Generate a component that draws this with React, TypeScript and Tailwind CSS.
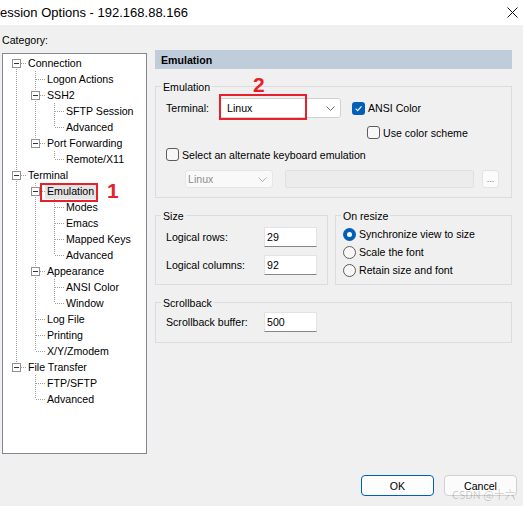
type TreeNode = { level: number; label: string; open?: boolean; selected?: boolean };

const TREE: TreeNode[] = [
  { level: 0, label: "Connection", open: true },
  { level: 1, label: "Logon Actions" },
  { level: 1, label: "SSH2", open: true },
  { level: 2, label: "SFTP Session" },
  { level: 2, label: "Advanced" },
  { level: 1, label: "Port Forwarding", open: true },
  { level: 2, label: "Remote/X11" },
  { level: 0, label: "Terminal", open: true },
  { level: 1, label: "Emulation", open: true, selected: true },
  { level: 2, label: "Modes" },
  { level: 2, label: "Emacs" },
  { level: 2, label: "Mapped Keys" },
  { level: 2, label: "Advanced" },
  { level: 1, label: "Appearance", open: true },
  { level: 2, label: "ANSI Color" },
  { level: 2, label: "Window" },
  { level: 1, label: "Log File" },
  { level: 1, label: "Printing" },
  { level: 1, label: "X/Y/Zmodem" },
  { level: 0, label: "File Transfer", open: true },
  { level: 1, label: "FTP/SFTP" },
  { level: 1, label: "Advanced" },
];

const DOT = { stroke: "#a0a0a0", strokeDasharray: "1 1", shapeRendering: "crispEdges" as const };

function hasNext(i: number) {
  const lv = TREE[i].level;
  for (let j = i + 1; j < TREE.length; j++) {
    if (TREE[j].level < lv) return false;
    if (TREE[j].level === lv) return true;
  }
  return false;
}

function ancestorAt(i: number, lv: number) {
  for (let j = i - 1; j >= 0; j--) if (TREE[j].level === lv) return j;
  return -1;
}

// one 19px indent column of the tree's dotted connectors
function Guide({ kind, up, down, open }: { kind: "pass" | "empty" | "own"; up?: boolean; down?: boolean; open?: boolean }) {
  return (
    <svg width="19" height="16" className="shrink-0">
      {kind === "pass" && <line x1="9.5" y1="0" x2="9.5" y2="16" {...DOT} />}
      {kind === "own" && (
        <>
          {up && <line x1="9.5" y1="0" x2="9.5" y2="8" {...DOT} />}
          {down && <line x1="9.5" y1="8" x2="9.5" y2="16" {...DOT} />}
          <line x1="10" y1="8.5" x2="19" y2="8.5" {...DOT} />
          {open && (
            <>
              <rect x="5.5" y="4.5" width="8" height="8" fill="#fff" stroke="#919191" shapeRendering="crispEdges" />
              <line x1="7" y1="8.5" x2="12" y2="8.5" stroke="#333" shapeRendering="crispEdges" />
            </>
          )}
        </>
      )}
    </svg>
  );
}

function Tree() {
  return (
    <div className="ml-[2px] mt-[6px] h-[401px] w-[145px] border border-[#828790] bg-white pl-[4px] pt-[1px]">
      {TREE.map((n, i) => {
        const cols = [];
        for (let c = 0; c < n.level; c++) {
          const a = ancestorAt(i, c);
          cols.push(<Guide key={c} kind={a >= 0 && hasNext(a) ? "pass" : "empty"} />);
        }
        cols.push(<Guide key="own" kind="own" up={i > 0} down={hasNext(i)} open={n.open} />);
        return (
          <div key={i} className="flex h-[16px] items-center">
            {cols}
            <span className={`h-[16px] px-[2px] leading-[17px] whitespace-nowrap ${n.selected ? "bg-[#e5e5e5]" : ""}`}>{n.label}</span>
          </div>
        );
      })}
    </div>
  );
}

function Check({ on }: { on?: boolean }) {
  if (on)
    return (
      <span className="flex h-[13px] w-[13px] shrink-0 items-center justify-center rounded-[3px] bg-[#005fb8]">
        <svg width="9" height="9" viewBox="0 0 9 9">
          <path d="M1.6 4.7 3.6 6.7 7.5 2.3" fill="none" stroke="#fff" strokeWidth="1.1" />
        </svg>
      </span>
    );
  return <span className="h-[13px] w-[13px] shrink-0 rounded-[3px] border border-[#5d5d5d] bg-[#f7f7f7]" />;
}

function Radio({ on }: { on?: boolean }) {
  if (on)
    return (
      <span className="flex h-[13px] w-[13px] shrink-0 items-center justify-center rounded-full bg-[#005fb8]">
        <span className="h-[5px] w-[5px] rounded-full bg-white" />
      </span>
    );
  return <span className="h-[13px] w-[13px] shrink-0 rounded-full border border-[#5d5d5d] bg-[#f7f7f7]" />;
}

function Chevron({ color }: { color: string }) {
  return (
    <svg width="9" height="5" viewBox="0 0 9 5">
      <path d="M0.5 0.5 4.5 4.5 8.5 0.5" fill="none" stroke={color} strokeWidth="1" />
    </svg>
  );
}

function Group({ title, className, inner, children }: { title: string; className?: string; inner?: string; children?: React.ReactNode }) {
  return (
    <div className={`border border-[#dcdcdc] ${className ?? ""}`}>
      <div className="-mt-[7px] ml-[5px] h-[13px] w-fit bg-[#f0f0f0] px-[2px] leading-[14px]">{title}</div>
      <div className={inner}>{children}</div>
    </div>
  );
}

function Field({ label, value }: { label: string; value: string }) {
  return (
    <div className="flex h-[20px] items-center leading-[20px]">
      <span className="h-[20px] w-[98px] leading-[21px]">{label}</span>
      <span className="h-[20px] w-[53px] border border-[#e3e3e3] border-b-[#868686] bg-white pl-[2px] leading-[19px]">{value}</span>
    </div>
  );
}

function RadioRow({ on, label }: { on?: boolean; label: string }) {
  return (
    <div className="flex h-[18px] items-center">
      <Radio on={on} />
      <span className="ml-[3px] h-[18px] leading-[19px]">{label}</span>
    </div>
  );
}

export default function App() {
  return (
    <div className="relative flex h-[506px] w-[523px] flex-col overflow-hidden bg-[#f0f0f0] font-['Liberation_Sans',Arial,sans-serif] text-[10.6px] text-black">
      <div className="flex h-[25px] shrink-0 items-center justify-between bg-white pr-[5px]">
        <span className="text-[13px]">ession Options - 192.168.88.166</span>
        <svg width="11" height="11" viewBox="0 0 11 11">
          <path d="M0.5 0.5 10.5 10.5 M10.5 0.5 0.5 10.5" stroke="#111" strokeWidth="1" />
        </svg>
      </div>

      <div className="flex flex-1 items-start">
        <div>
          <div className="ml-[2px] mt-[8px] h-[14px] leading-[15px]">Category:</div>
          <Tree />
        </div>

        <div className="ml-[8px] mt-[25px] w-[357px]">
          <div className="h-[19px] bg-[#bfcddb] pl-[6px] font-bold leading-[20px]">Emulation</div>

          <Group title="Emulation" className="mt-[17px]" inner="pb-[9px] pl-[10px]">
            <div className="mt-[5px] flex h-[20px] items-center">
              <span className="h-[20px] w-[53px] leading-[21px]">Terminal:</span>
              <span className="flex h-[20px] w-[122px] items-center justify-between rounded-[3px] border border-[#d1d1d1] bg-white pl-[7px] pr-[5px]">
                <span className="leading-[19px]">Linux</span>
                <Chevron color="#6b6b6b" />
              </span>
              <span className="ml-[11px]">
                <Check on />
              </span>
              <span className="ml-[3px] h-[20px] leading-[21px]">ANSI Color</span>
            </div>
            <div className="mt-[8px] flex h-[13px] items-center pl-[201px]">
              <Check />
              <span className="ml-[3px] h-[13px] leading-[14px]">Use color scheme</span>
            </div>
            <div className="mt-[9px] flex h-[13px] items-center">
              <Check />
              <span className="ml-[3px] h-[13px] leading-[14px]">Select an alternate keyboard emulation</span>
            </div>
            <div className="mt-[9px] flex h-[18px]">
              <span className="ml-[19px] flex w-[88px] items-center justify-between rounded-[3px] border border-[#e6e6e6] bg-[#f9f9f9] pl-[2px] pr-[5px] text-[#8e8e8e]">
                <span className="leading-[17px]">Linux</span>
                <Chevron color="#b5b5b5" />
              </span>
              <span className="ml-[12px] w-[189px] rounded-[2px] border border-[#e0e0e0] bg-[#ececec]" />
              <span className="ml-[8px] flex w-[17px] items-end justify-center rounded-[3px] border border-[#e3e3e3] bg-[#fbfbfb] pb-[3px] text-[9px] leading-none text-[#7a7a7a]">
                ...
              </span>
            </div>
          </Group>

          <div className="mt-[17px] flex">
            <Group title="Size" className="h-[70px] w-[173px]" inner="pl-[10px]">
              <div className="mt-[5px]">
                <Field label="Logical rows:" value="29" />
              </div>
              <div className="mt-[8px]">
                <Field label="Logical columns:" value="92" />
              </div>
            </Group>
            <Group title="On resize" className="ml-[7px] h-[70px] w-[177px]" inner="pl-[7px]">
              <div className="mt-[3px]">
                <RadioRow on label="Synchronize view to size" />
                <RadioRow label="Scale the font" />
                <RadioRow label="Retain size and font" />
              </div>
            </Group>
          </div>

          <Group title="Scrollback" className="mt-[17px] h-[41px]" inner="pl-[10px]">
            <div className="mt-[3px]">
              <Field label="Scrollback buffer:" value="500" />
            </div>
          </Group>
        </div>
      </div>

      <div className="flex h-[31px] shrink-0 items-start justify-end gap-[10px] pr-[6px]">
        <button className="h-[21px] w-[73px] rounded-[4px] border border-[#005fb8] bg-[#fdfdfd] leading-[20px]">OK</button>
        <button className="h-[21px] w-[73px] rounded-[4px] border border-[#d0d0d0] bg-[#fbfbfb] leading-[20px]">Cancel</button>
      </div>

      {/* red callouts */}
      <div className="absolute left-[40px] top-[183px] h-[19px] w-[58px] border-2 border-[#e8202a]" />
      <div className="absolute left-[107px] top-[180px] text-[21px] font-bold leading-none text-[#e8202a]">1</div>
      <div className="absolute left-[219px] top-[94px] h-[26px] w-[88px] border-2 border-[#e8202a]" />
      <div className="absolute left-[253px] top-[74px] text-[21px] font-bold leading-none text-[#e8202a]">2</div>

      <div className="absolute left-[452px] top-[489px] font-['Noto_Sans_CJK_SC',sans-serif] text-[11px] leading-none text-black/20">
        CSDN @十六
      </div>
    </div>
  );
}
